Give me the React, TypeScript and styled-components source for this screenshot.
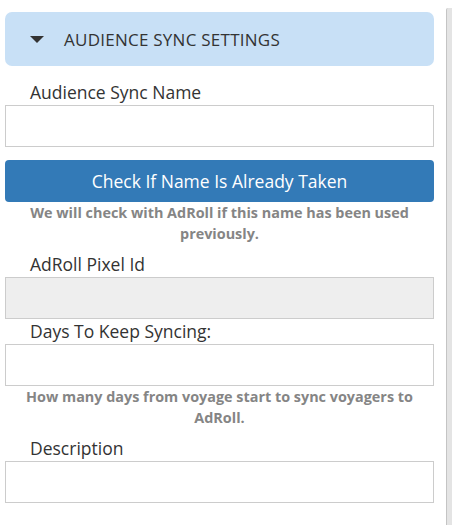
import styled, { createGlobalStyle } from 'styled-components';

const GlobalStyle = createGlobalStyle`
  body {
    margin: 0;
    background: #fff;
    font-family: 'Open Sans', 'Liberation Sans', sans-serif;
    color: #333;
  }
`;

type FieldProps = {
  label: string;
  disabled?: boolean;
  help?: string;
};

const Field = ({ label, disabled, help }: FieldProps) => (
  <FieldGroup>
    <FieldLabel>{label}</FieldLabel>
    <TextInput disabled={disabled} />
    {help && <HelpText>{help}</HelpText>}
  </FieldGroup>
);

export default function App() {
  return (
    <>
      <GlobalStyle />
      <Page>
        <Column>
          <SectionHeader>
            <Caret />
            <SectionTitle>AUDIENCE SYNC SETTINGS</SectionTitle>
          </SectionHeader>

          <FieldGroup>
            <FieldLabel>Audience Sync Name</FieldLabel>
            <TextInput />
          </FieldGroup>
          <CheckButton type="button">Check If Name Is Already Taken</CheckButton>
          <HelpText>We will check with AdRoll if this name has been used previously.</HelpText>

          <Field label="AdRoll Pixel Id" disabled />
          <Field
            label="Days To Keep Syncing:"
            help="How many days from voyage start to sync voyagers to AdRoll."
          />
          <Field label="Description" />
        </Column>
        <SideEdge />
      </Page>
    </>
  );
}

const Page = styled.div`
  display: flex;
  width: 452px;
  height: 525px;
  overflow: hidden;
`;

const Column = styled.div`
  width: 430px;
  margin-left: 5px;
  padding-top: 12px;
  display: flex;
  flex-direction: column;
`;

const SideEdge = styled.div`
  margin-left: 12px;
  margin-top: 8px;
  width: 5px;
  flex-shrink: 0;
  border-left: 1px solid #c4c4c4;
  background: #e4e4e4;
  border-top-left-radius: 2px;
`;

const SectionHeader = styled.div`
  height: 54px;
  background: #c8e0f6;
  border-radius: 7px;
  display: flex;
  align-items: center;
  padding-left: 25px;
  margin-bottom: 14px;
`;

const Caret = styled.span`
  width: 0;
  height: 0;
  border-left: 7px solid transparent;
  border-right: 7px solid transparent;
  border-top: 7px solid #333;
  margin-right: 20px;
  margin-top: 1px;
`;

const SectionTitle = styled.span`
  font-size: 17px;
  color: #333;
  letter-spacing: 0.25px;
`;

const FieldGroup = styled.div`
  display: flex;
  flex-direction: column;
`;

const FieldLabel = styled.label`
  font-size: 17.5px;
  line-height: 25px;
  padding-left: 25px;
  color: #333;
`;

const TextInput = styled.input`
  box-sizing: border-box;
  width: 100%;
  height: 42px;
  margin: 0;
  border: 1px solid #ccc;
  border-radius: 0;
  background: ${(p) => (p.disabled ? '#eeeeee' : '#fff')};
  font: inherit;
  padding: 6px 12px;
`;

const CheckButton = styled.button`
  box-sizing: border-box;
  width: 100%;
  height: 42px;
  margin-top: 13px;
  border: none;
  border-radius: 4px;
  background: #337ab7;
  color: #fff;
  font-family: 'Open Sans', 'Liberation Sans', sans-serif;
  font-size: 17.5px;
  cursor: pointer;
`;

const HelpText = styled.p`
  margin: 0 0 8px;
  padding: 0 15px;
  text-align: center;
  font-size: 14.4px;
  line-height: 21px;
  font-weight: 700;
  color: #858585;
`;
